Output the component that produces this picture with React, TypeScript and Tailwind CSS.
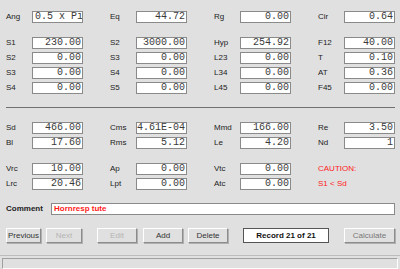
import React from "react"

const sans = { fontFamily: '"Liberation Sans", Arial, sans-serif' }

function Field({ label, value, left }: { label: string; value: string; left?: boolean }) {
  return (
    <div className="flex items-center h-[12px]">
      <span className="w-[26px] text-[8px] leading-none text-[#222]">{label}</span>
      <div
        className={
          "w-[51px] h-[12px] bg-white border border-[#8a8a8a] flex items-center whitespace-nowrap overflow-hidden font-['Liberation_Mono',monospace] text-[10px] leading-none text-[#3a3a3a] " +
          (left ? "justify-start pl-[2px]" : "justify-end pr-[1px]")
        }
      >
        {value}
      </div>
    </div>
  )
}

function Row({ children }: { children: React.ReactNode }) {
  return <div className="grid grid-cols-[104px_104px_104px_104px]">{children}</div>
}

function Btn({ label, w, tone }: { label: string; w: string; tone: string }) {
  return (
    <div
      className={
        "h-[15px] flex items-center justify-center text-[8px] leading-none bg-[#e0e0e0] border border-t-white border-l-white border-b-[#8c8c8c] border-r-[#8c8c8c] shadow-[1px_1px_0_#b0b0b0] " +
        w +
        " " +
        tone
      }
    >
      {label}
    </div>
  )
}

export default function App() {
  return (
    <div className="w-[400px] h-[269px] bg-[#e0e0e0] overflow-hidden flex flex-col" style={sans}>
      <div className="pl-[6px] pt-[11px] flex flex-col">
        <Row>
          <Field label="Ang" value="0.5 x Pi" left />
          <Field label="Eq" value="44.72" />
          <Field label="Rg" value="0.00" />
          <Field label="Cir" value="0.64" />
        </Row>
        <div className="flex flex-col gap-[3px] mt-[14px]">
          <Row>
            <Field label="S1" value="230.00" />
            <Field label="S2" value="3000.00" />
            <Field label="Hyp" value="254.92" />
            <Field label="F12" value="40.00" />
          </Row>
          <Row>
            <Field label="S2" value="0.00" />
            <Field label="S3" value="0.00" />
            <Field label="L23" value="0.00" />
            <Field label="T" value="0.10" />
          </Row>
          <Row>
            <Field label="S3" value="0.00" />
            <Field label="S4" value="0.00" />
            <Field label="L34" value="0.00" />
            <Field label="AT" value="0.36" />
          </Row>
          <Row>
            <Field label="S4" value="0.00" />
            <Field label="S5" value="0.00" />
            <Field label="L45" value="0.00" />
            <Field label="F45" value="0.00" />
          </Row>
        </div>

        <div className="mt-[13px] w-[389px] h-[1px] bg-[#707070]" />

        <div className="flex flex-col gap-[3px] mt-[14px]">
          <Row>
            <Field label="Sd" value="466.00" />
            <Field label="Cms" value="4.61E-04" />
            <Field label="Mmd" value="166.00" />
            <Field label="Re" value="3.50" />
          </Row>
          <Row>
            <Field label="Bl" value="17.60" />
            <Field label="Rms" value="5.12" />
            <Field label="Le" value="4.20" />
            <Field label="Nd" value="1" />
          </Row>
        </div>

        <div className="flex flex-col gap-[3px] mt-[14px]">
          <Row>
            <Field label="Vrc" value="10.00" />
            <Field label="Ap" value="0.00" />
            <Field label="Vtc" value="0.00" />
            <div className="flex items-center h-[12px] text-[8px] leading-none text-[#ff2020]">CAUTION:</div>
          </Row>
          <Row>
            <Field label="Lrc" value="20.46" />
            <Field label="Lpt" value="0.00" />
            <Field label="Atc" value="0.00" />
            <div className="flex items-center h-[12px] text-[8px] leading-none text-[#ff2020]">S1 &lt; Sd</div>
          </Row>
        </div>

        <div className="flex items-center mt-[13px] h-[12px]">
          <span className="w-[45px] text-[8px] leading-none text-[#222] font-semibold">Comment</span>
          <div className="w-[344px] h-[12px] bg-white border border-[#8a8a8a] flex items-center pl-[2px] text-[8px] leading-none text-[#ff1a1a] font-semibold">
            Hornresp tute
          </div>
        </div>

        <div className="flex items-center mt-[13px]">
          <Btn label="Previous" w="w-[35px]" tone="text-[#333]" />
          <div className="w-[5px]" />
          <Btn label="Next" w="w-[36px]" tone="text-[#b4b4b4]" />
          <div className="w-[15px]" />
          <Btn label="Edit" w="w-[40px]" tone="text-[#b4b4b4]" />
          <div className="w-[6px]" />
          <Btn label="Add" w="w-[40px]" tone="text-[#333]" />
          <div className="w-[5px]" />
          <Btn label="Delete" w="w-[40px]" tone="text-[#333]" />
          <div className="w-[15px]" />
          <div className="w-[86px] h-[15px] bg-white border border-[#555] flex items-center justify-center text-[8px] leading-none text-[#111] font-semibold">
            Record 21 of 21
          </div>
          <div className="w-[15px]" />
          <Btn label="Calculate" w="w-[51px]" tone="text-[#777]" />
        </div>
      </div>

      <div className="mt-[12px] border-t border-t-[#bdbdbd] flex-1 px-[2px] pt-[2px] pb-[1px]">
        <div className="h-[11px] border border-t-[#a0a0a0] border-l-[#a0a0a0] border-b-white border-r-white" />
      </div>
    </div>
  )
}
